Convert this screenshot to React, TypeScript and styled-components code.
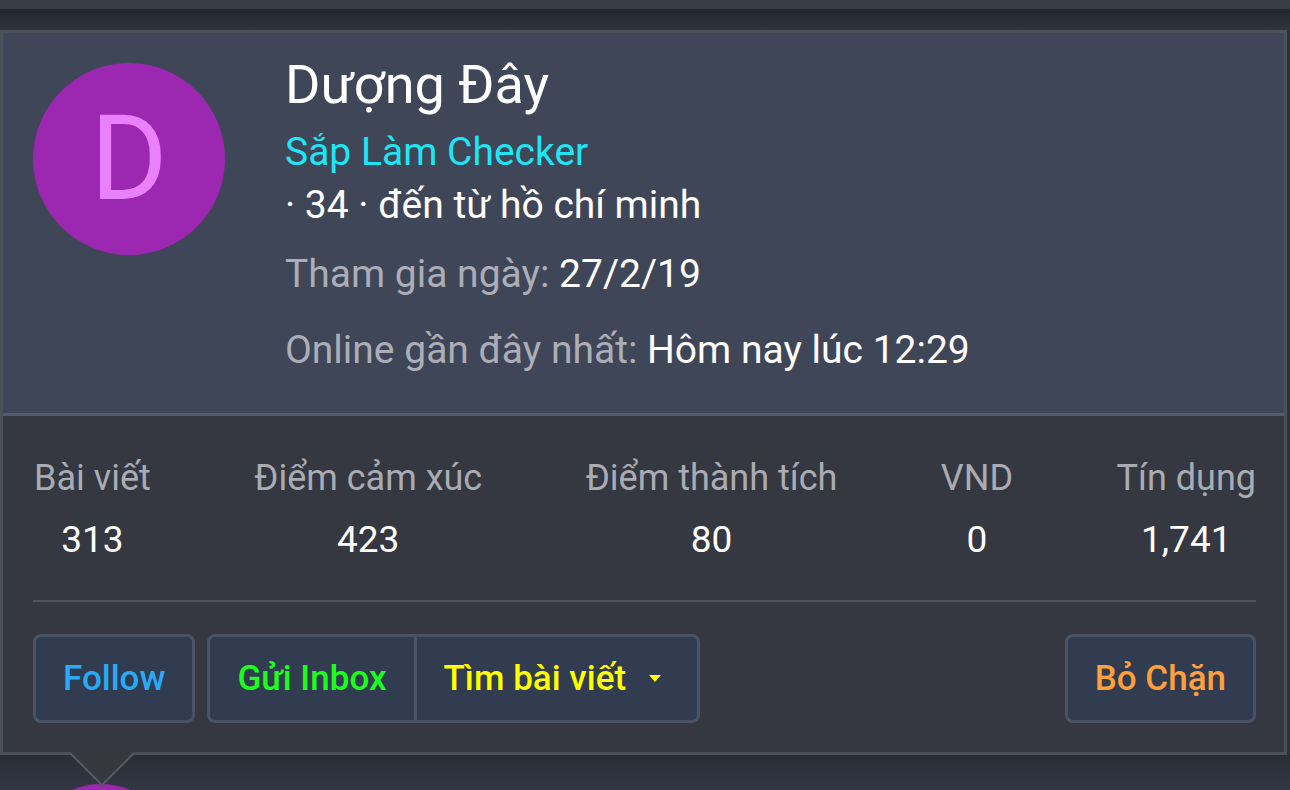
import React from "react";
import styled, { createGlobalStyle } from "styled-components";

const GlobalStyle = createGlobalStyle`
  html, body {
    margin: 0;
    padding: 0;
    background: #2b2e37;
    font-family: Roboto, "Noto Sans", "Liberation Sans", sans-serif;
  }
`;

const Page = styled.div`
  width: 1290px;
  height: 790px;
  overflow: hidden;
  background: #2e313a;
`;

const TopBar = styled.div`
  height: 9px;
  background: #383c47;
`;

const Shade = styled.div`
  height: 21px;
  background: linear-gradient(#22252d, #30343e);
`;

const Card = styled.div`
  position: relative;
  width: 1281px;
  border: 3px solid #4b505b;
`;

const Header = styled.div`
  display: flex;
  align-items: flex-start;
  gap: 60px;
  background: #3f4658;
  padding: 21px 30px 36px 30px;
  border-bottom: 3px solid #555c6b;
`;

const Avatar = styled.div<{ $size: number }>`
  flex: none;
  width: ${p => p.$size}px;
  height: ${p => p.$size}px;
  margin-top: 9px;
  border-radius: 50%;
  background: #9c27b0;
  color: #ea80fc;
  display: flex;
  align-items: center;
  justify-content: center;
  font-size: 118px;
  line-height: 1;
`;

const Info = styled.div`
  display: flex;
  flex-direction: column;
`;

const Name = styled.div`
  font-size: 54px;
  line-height: 62px;
  color: #ffffff;
  margin-bottom: 10px;
`;

const Line = styled.div<{ $gap?: number; $color?: string }>`
  font-size: 39px;
  line-height: 53px;
  margin-top: ${p => p.$gap || 0}px;
  color: ${p => p.$color || "#ffffff"};
  white-space: nowrap;
`;

const Muted = styled.span`
  color: #abaeb6;
`;

const Body = styled.div`
  position: relative;
  z-index: 1;
  background: #353841;
  padding: 40px 28px 29px 30px;
`;

const Stats = styled.div`
  display: flex;
  justify-content: space-between;
  padding: 0 0 0 1px;
`;

const Stat = styled.div`
  display: flex;
  flex-direction: column;
  align-items: center;
  line-height: 44px;
`;

const StatLabel = styled.div`
  font-size: 36px;
  color: #a9acb4;
  white-space: nowrap;
`;

const StatValue = styled.div`
  font-size: 37px;
  color: #ffffff;
  margin-top: 18px;
`;

const Divider = styled.div`
  height: 2px;
  background: #4f535c;
  margin: 38px 0 32px;
`;

const Actions = styled.div`
  display: flex;
  align-items: center;
  gap: 12px;
`;

const Group = styled.div`
  display: flex;
`;

const Button = styled.button<{ $color: string; $pos?: "left" | "right" }>`
  display: flex;
  align-items: center;
  height: 89px;
  padding: 0 27px;
  background: #323c50;
  border: 3px solid #4a5266;
  border-radius: ${p =>
    p.$pos === "left" ? "8px 0 0 8px" : p.$pos === "right" ? "0 8px 8px 0" : "8px"};
  ${p => (p.$pos === "right" ? "border-left-width: 0;" : "")}
  color: ${p => p.$color};
  font-family: Roboto, "Noto Sans", sans-serif;
  font-size: 35px;
  font-weight: 500;
  white-space: nowrap;
  cursor: pointer;
`;

const Caret = styled.span`
  display: inline-block;
  margin-left: 23px;
  margin-right: 9px;
  border-top: 7px solid #ffff00;
  border-left: 6px solid transparent;
  border-right: 6px solid transparent;
`;

const Pushed = styled.div`
  margin-left: auto;
`;

const Arrow = styled.div`
  position: absolute;
  z-index: 0;
  left: 76px;
  bottom: -25px;
  width: 44px;
  height: 44px;
  background: #363840;
  border-right: 2px solid #565a63;
  border-bottom: 2px solid #565a63;
  transform: rotate(45deg);
`;

const Below = styled.div`
  height: 40px;
  background: linear-gradient(#2a2d35, #3d4253);
  padding-top: 29px;
`;

const NextAvatar = styled.div`
  width: 150px;
  height: 150px;
  margin-left: 26px;
  border-radius: 50%;
  background: #9c27b0;
`;

const stats = [
  { label: "Bài viết", value: "313" },
  { label: "Điểm cảm xúc", value: "423" },
  { label: "Điểm thành tích", value: "80" },
  { label: "VND", value: "0" },
  { label: "Tín dụng", value: "1,741" },
];

export default function App() {
  return (
    <Page>
      <GlobalStyle />
      <TopBar />
      <Shade />
      <Card>
        <Header>
          <Avatar $size={192}>D</Avatar>
          <Info>
            <Name>Dượng Đây</Name>
            <Line $color="#1ee6f5">Sắp Làm Checker</Line>
            <Line>· 34 · đến từ hồ chí minh</Line>
            <Line $gap={16}>
              <Muted>Tham gia ngày:</Muted> 27/2/19
            </Line>
            <Line $gap={23}>
              <Muted>Online gần đây nhất:</Muted> Hôm nay lúc 12:29
            </Line>
          </Info>
        </Header>
        <Body>
          <Stats>
            {stats.map(s => (
              <Stat key={s.label}>
                <StatLabel>{s.label}</StatLabel>
                <StatValue>{s.value}</StatValue>
              </Stat>
            ))}
          </Stats>
          <Divider />
          <Actions>
            <Button $color="#2aaaf6">Follow</Button>
            <Group>
              <Button $color="#1cff1c" $pos="left">Gửi Inbox</Button>
              <Button $color="#ffff00" $pos="right">
                Tìm bài viết
                <Caret />
              </Button>
            </Group>
            <Pushed>
              <Button $color="#ffa03c">Bỏ Chặn</Button>
            </Pushed>
          </Actions>
        </Body>
        <Arrow />
      </Card>
      <Below>
        <NextAvatar />
      </Below>
    </Page>
  );
}
